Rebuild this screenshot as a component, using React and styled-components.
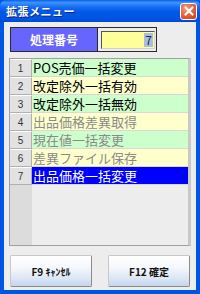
import React from 'react';
import styled, { createGlobalStyle } from 'styled-components';

const GlobalStyle = createGlobalStyle`
  html, body {
    margin: 0;
    padding: 0;
    overflow: hidden;
    background: #ffffff;
  }
`;

const FONT = `"MS UI Gothic", "Noto Sans CJK JP", "Noto Sans", sans-serif`;

const rows = [
  { no: 1, label: 'POS売価一括変更', tone: 'green' },
  { no: 2, label: '改定除外一括有効', tone: 'yellow' },
  { no: 3, label: '改定除外一括無効', tone: 'green' },
  { no: 4, label: '出品価格差異取得', tone: 'yellow', disabled: true },
  { no: 5, label: '現在値一括変更', tone: 'green', disabled: true },
  { no: 6, label: '差異ファイル保存', tone: 'yellow', disabled: true },
  { no: 7, label: '出品価格一括変更', tone: 'green', selected: true },
];

export default function App() {
  return (
    <>
      <GlobalStyle />
      <Window>
        <TitleBar>
          <Title>拡張メニュー</Title>
          <CloseButton>
            <svg width="10" height="10" viewBox="0 0 10 10">
              <path d="M1.5 1.5 L8.5 8.5 M8.5 1.5 L1.5 8.5" stroke="#fff" strokeWidth="2" strokeLinecap="square" />
            </svg>
          </CloseButton>
        </TitleBar>
        <Client>
          <Header>
            <Label>処理番号</Label>
            <InputFrame>
              <Field>
                <Selected>7</Selected>
              </Field>
            </InputFrame>
          </Header>
          <Grid>
            {rows.map((r) => (
              <Row key={r.no}>
                <RowNo>{r.no}</RowNo>
                <Cell $tone={r.tone} $disabled={r.disabled} $selected={r.selected}>
                  {r.label}
                </Cell>
              </Row>
            ))}
            <Filler>
              <FillerNo />
              <FillerBody />
            </Filler>
          </Grid>
          <Buttons>
            <Button>F9 ｷｬﾝｾﾙ</Button>
            <Button>F12 確定</Button>
          </Buttons>
        </Client>
      </Window>
    </>
  );
}

const Window = styled.div`
  width: 200px;
  height: 294px;
  display: flex;
  flex-direction: column;
  background: #0054e3;
  box-sizing: border-box;
  padding-bottom: 4px;
  font-family: ${FONT};
`;

const TitleBar = styled.div`
  height: 22px;
  flex: none;
  display: flex;
  align-items: center;
  justify-content: space-between;
  padding: 0 3px 0 6px;
  background: linear-gradient(#0a5fe8 0%, #3d95ff 12%, #1a6ef5 30%, #0058e6 55%, #0054e3 85%, #0047d0 100%);
  border-radius: 6px 6px 0 0;
`;

const Title = styled.span`
  color: #ffffff;
  font-size: 11px;
  font-weight: bold;
  text-shadow: 1px 1px 0 #0a2a80;
  letter-spacing: 0.5px;
`;

const CloseButton = styled.div`
  width: 17px;
  height: 17px;
  box-sizing: border-box;
  border: 1px solid #ffffff;
  border-radius: 3px;
  background: radial-gradient(circle at 35% 30%, #f0a080 0%, #e35d35 55%, #c43a14 100%);
  display: flex;
  align-items: center;
  justify-content: center;
`;

const Client = styled.div`
  flex: 1;
  margin: 0 4px;
  background: #ededed;
  display: flex;
  flex-direction: column;
  padding: 5px 5px 3px 5px;
  box-sizing: border-box;
`;

const Header = styled.div`
  display: flex;
  height: 25px;
  margin-left: 1px;
  width: 147px;
  box-sizing: border-box;
  border: 1px solid #2a2a2a;
`;

const Label = styled.div`
  width: 86px;
  background: #6666ff;
  color: #ffffff;
  font-weight: bold;
  font-size: 12px;
  display: flex;
  align-items: center;
  justify-content: center;
  border-right: 1px solid #2a2a2a;
`;

const InputFrame = styled.div`
  flex: 1;
  background: #ededed;
  padding: 3px 1px 2px 3px;
  display: flex;
`;

const Field = styled.div`
  flex: 1;
  background: #ffff99;
  border: 1px solid #555555;
  border-right-color: #d0d0d0;
  border-bottom-color: #d0d0d0;
  display: flex;
  align-items: center;
  justify-content: flex-end;
  padding-right: 1px;
`;

const Selected = styled.span`
  background: #a9bedc;
  color: #1a2a55;
  font-size: 12px;
  line-height: 14px;
  padding: 0 1px;
`;

const Grid = styled.div`
  margin-top: 6px;
  height: 188px;
  box-sizing: border-box;
  border: 1px solid #a0a0a0;
  border-right: 3px solid #c8c8c8;
  display: flex;
  flex-direction: column;
  background: #ededed;
`;

const Row = styled.div`
  display: flex;
  height: 18px;
  flex: none;
`;

const RowNo = styled.div`
  width: 22px;
  box-sizing: border-box;
  background: #e2e2e2;
  border-top: 1px solid #ffffff;
  border-bottom: 1px solid #b0b0b0;
  border-right: 1px solid #b0b0b0;
  font-family: "Liberation Sans", Arial, sans-serif;
  font-size: 10px;
  color: #333333;
  display: flex;
  align-items: center;
  justify-content: center;
`;

const toneColor = { green: '#ccffcc', yellow: '#ffffcc' };

const Cell = styled.div`
  flex: 1;
  box-sizing: border-box;
  padding-left: 1px;
  border-bottom: 1px solid #d8d8d8;
  background: ${(p) => (p.$selected ? '#0000ff' : toneColor[p.$tone])};
  color: ${(p) => (p.$selected ? '#ffffff' : p.$disabled ? '#8a8a8a' : '#000000')};
  font-size: 13px;
  line-height: 17px;
  white-space: nowrap;
  overflow: hidden;
`;

const Filler = styled.div`
  flex: 1;
  display: flex;
`;

const FillerNo = styled.div`
  width: 22px;
  background: #dcdcdc;
`;

const FillerBody = styled.div`
  flex: 1;
  background: #ededed;
`;

const Buttons = styled.div`
  margin-top: 9px;
  display: flex;
  justify-content: space-between;
  padding: 0 1px 0 1px;
`;

const Button = styled.div`
  width: 82px;
  height: 32px;
  box-sizing: border-box;
  border: 1px solid #8a8a8a;
  border-top-color: #c8c8c8;
  border-left-color: #c8c8c8;
  border-radius: 2px;
  background: linear-gradient(#ffffff 0%, #f4f7fc 40%, #dbe6f5 75%, #c3d5ee 100%);
  display: flex;
  align-items: center;
  justify-content: center;
  font-size: 10px;
  font-weight: bold;
  color: #111111;
`;
